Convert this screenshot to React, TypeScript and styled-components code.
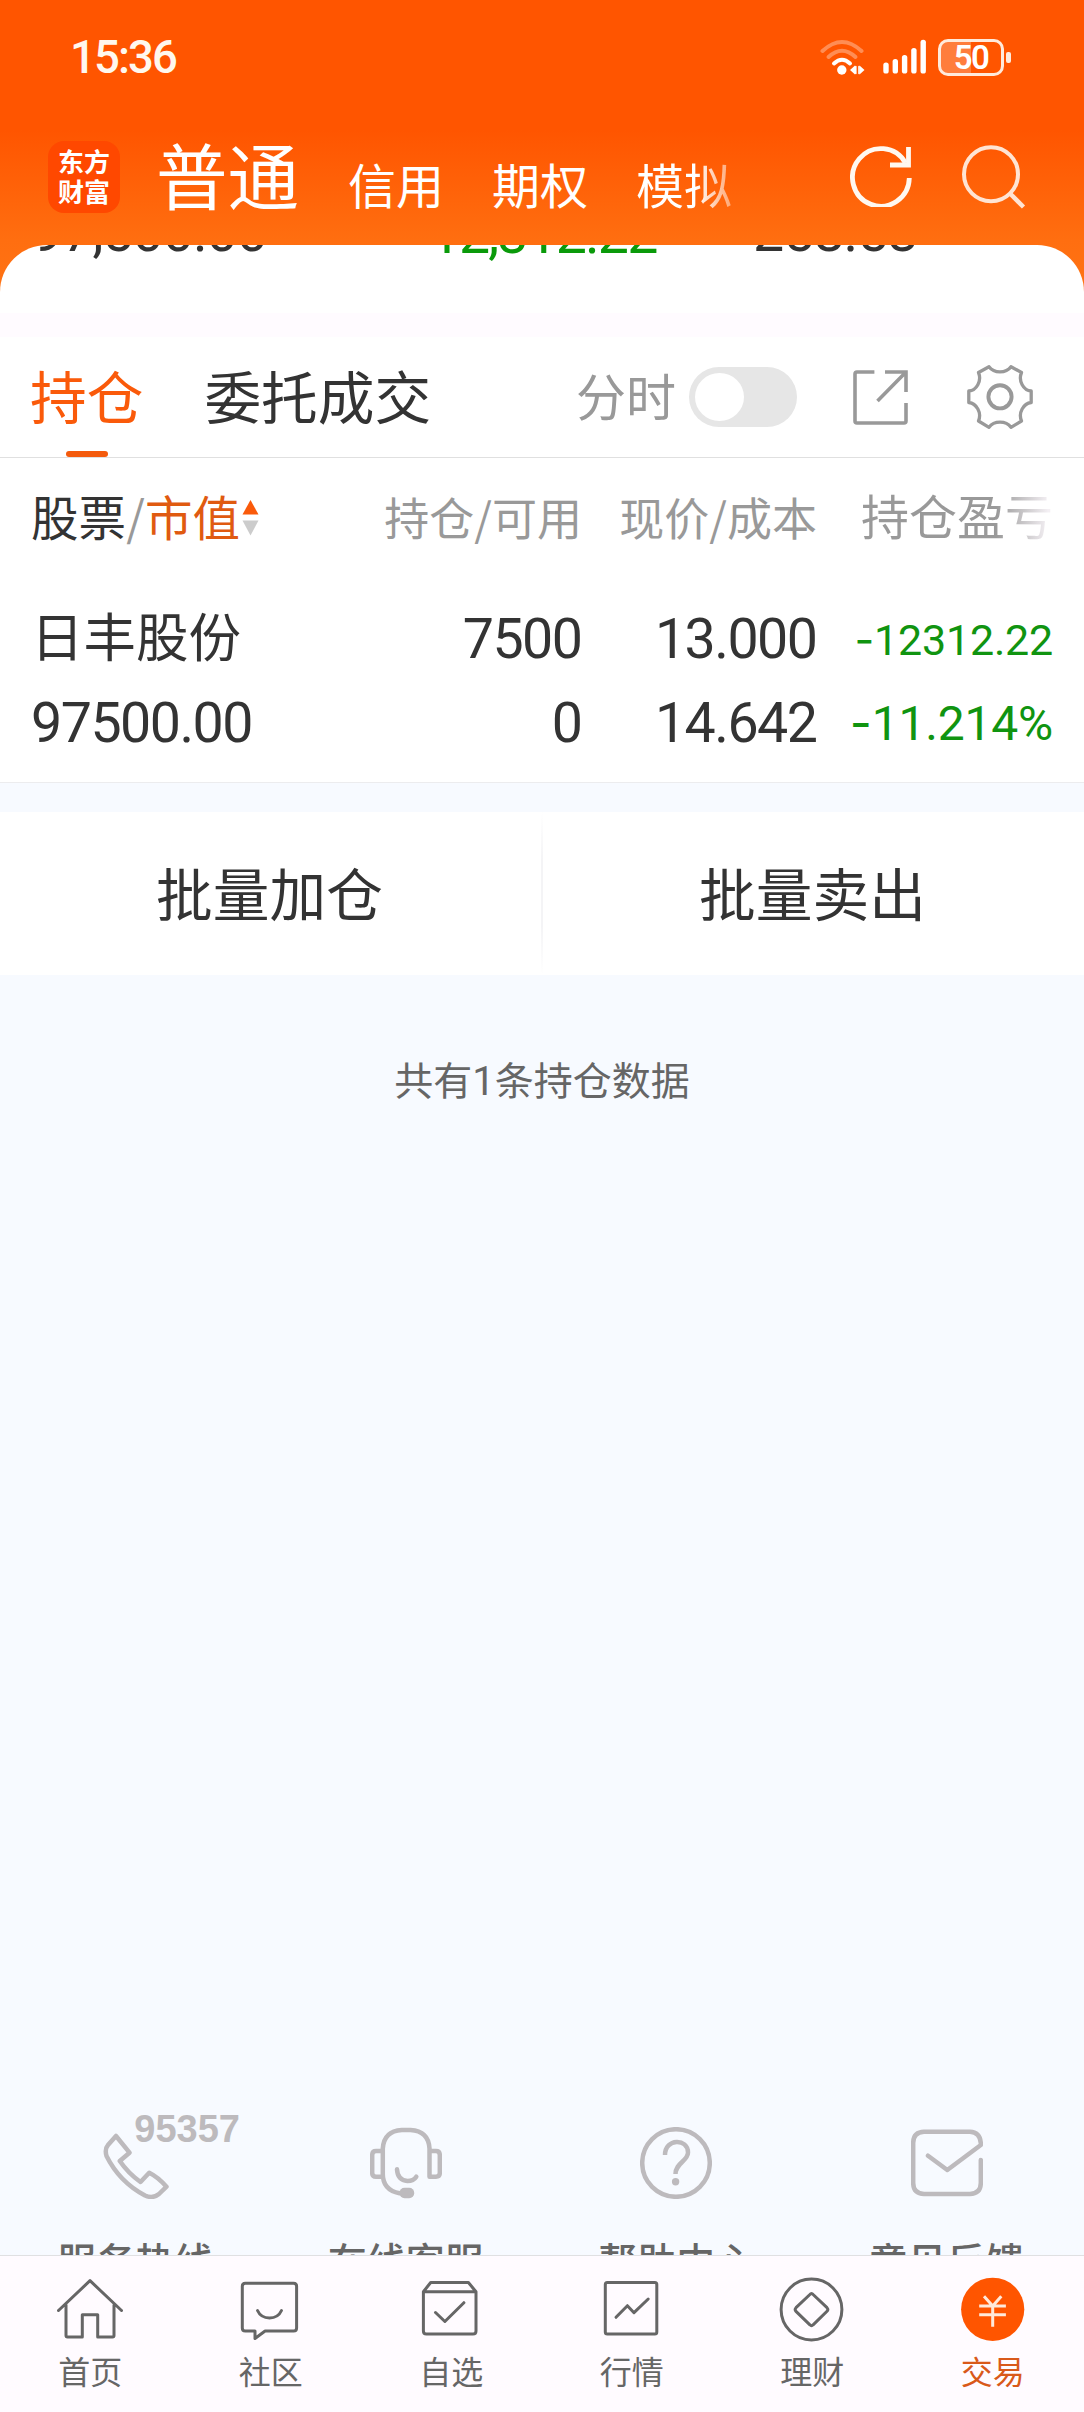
import React from 'react';
import styled, { createGlobalStyle } from 'styled-components';

const CJK = '"Noto Sans CJK SC", sans-serif';
const NUM = 'Roboto, "Noto Sans CJK SC", sans-serif';

const GlobalStyle = createGlobalStyle`
  * { box-sizing: border-box; }
  body { margin: 0; background: #f7faff; }
`;

const Screen = styled.div`
  width: 1084px;
  height: 2412px;
  display: flex;
  flex-direction: column;
  overflow: hidden;
  background: #f7faff;
  color: #333;
  font-family: ${CJK};
`;

const Top = styled.header`
  background: linear-gradient(#ff5500 0, #ff5500 130px, #ff6e10 240px, #ff7414 300px);
`;

const StatusBar = styled.div`
  height: 114px;
  display: flex;
  align-items: center;
  padding: 0 73px 0 70px;
`;

const Clock = styled.span`
  flex: 1;
  padding-top: 2px;
  font: 500 45.5px/60px ${NUM};
  letter-spacing: -1.9px;
  color: #fff8ee;
`;

const StatusIcons = styled.div`
  display: flex;
  align-items: center;
  svg { display: block; }
`;

const Battery = styled.div`
  width: 66px;
  height: 37px;
  margin-left: 11px;
  display: flex;
  align-items: center;
  justify-content: center;
  border: 3px solid #ffeadb;
  border-radius: 10px;
  background: linear-gradient(90deg, #ff7d3c 50%, transparent 50%);
  font: 600 33px/33px ${NUM};
  letter-spacing: -1.5px;
  color: #fff;
`;

const BatteryTip = styled.div`
  width: 5px;
  height: 11px;
  margin-left: 2px;
  border-radius: 2px;
  background: #ffeadb;
`;

const AppBar = styled.div`
  height: 131px;
  display: flex;
  align-items: center;
  padding: 0 58px 6px 48px;
  svg { display: block; }
`;

const Logo = styled.div`
  width: 72px;
  height: 72px;
  padding-top: 5px;
  border-radius: 16px;
  background: #ff4800;
  color: #fff;
  text-align: center;
  font: 700 26px/30px ${CJK};
`;

const Accounts = styled.nav`
  flex: 1;
  height: 88px;
  margin-left: 36px;
  display: flex;
  align-items: baseline;
  gap: 48px;
  color: #fff;
  line-height: 80px;
`;

const Account = styled.span<{ $active?: boolean; $fade?: boolean }>`
  font-size: ${p => (p.$active ? 71.5 : 48)}px;
  margin-right: ${p => (p.$active ? 1 : 0)}px;
  ${p => p.$fade && `
    background: linear-gradient(90deg, #fff 62%, rgba(255,255,255,.45) 98%);
    background-clip: text;
    -webkit-background-clip: text;
    color: transparent;
  `}
`;

const BarIcons = styled.div`
  display: flex;
  gap: 50px;
`;

const Sheet = styled.section`
  height: 68px;
  overflow: hidden;
  border-radius: 47px 47px 0 0;
  background: #fff;
`;

const Summary = styled.div`
  display: grid;
  grid-template-columns: 374px 347px 1fr;
  margin-top: -42px;
  padding-left: 32px;
  font: 400 55.5px/60px ${NUM};
`;

const Figure = styled.span<{ $loss?: boolean }>`
  letter-spacing: ${p => (p.$loss ? -1.9 : -1)}px;
  color: ${p => (p.$loss ? '#0a9a0a' : '#333')};
`;

const Strip = styled.div`
  height: 24px;
  background: #fffbff;
`;

const TabRow = styled.div`
  height: 121px;
  display: flex;
  align-items: center;
  padding: 0 51px 0 30px;
  background: #fff;
  border-bottom: 1px solid #e0e0e0;
  svg { display: block; }
`;

const Tab = styled.div<{ $active?: boolean }>`
  position: relative;
  height: 120px;
  margin-right: 61px;
  font-size: 56.7px;
  line-height: 114px;
  color: ${p => (p.$active ? '#fa5a0a' : '#333')};
  ${p => p.$active && `
    &::after {
      content: '';
      position: absolute;
      left: 36px;
      bottom: 0;
      width: 42px;
      height: 6px;
      border-radius: 3px;
      background: #f45a0c;
    }
  `}
`;

const Tools = styled.div`
  margin-left: auto;
  display: flex;
  align-items: center;
`;

const ToolLabel = styled.span`
  font-size: 50px;
  line-height: 114px;
  height: 120px;
  color: #999;
`;

const Switch = styled.div`
  width: 108px;
  height: 60px;
  margin: 0 56px 0 13px;
  padding: 6px;
  border-radius: 30px;
  background: #e6e6e6;
`;

const Knob = styled.div`
  width: 49px;
  height: 48px;
  border-radius: 50%;
  background: #fff;
`;

const Table = styled.section`
  background: #fff;
  border-bottom: 1px solid #ececee;
  padding: 0 31px 17px;
`;

const Row = styled.div<{ $height: number; $gap?: number }>`
  display: grid;
  grid-template-columns: 351px 200px 235px 236px;
  height: ${p => p.$height}px;
  margin-top: ${p => p.$gap ?? 0}px;
  line-height: ${p => p.$height}px;
`;

const HeadFirst = styled.div`
  display: flex;
  align-items: center;
  margin-top: -6px;
  font-size: 47.5px;
`;

const Slash = styled.i`
  width: 19px;
  text-align: center;
  font-style: normal;
  color: #999;
`;

const Sorted = styled.b`
  font-weight: 400;
  color: #e05a10;
`;

const Head = styled.div`
  margin-top: -2px;
  text-align: right;
  white-space: nowrap;
  font-size: 45px;
  color: #999;
`;

const FadedHead = styled(Head)`
  margin-top: -4px;
  font-size: 48px;
  background: linear-gradient(90deg, #999 76%, #f4f0f4 98%);
  background-clip: text;
  -webkit-background-clip: text;
  color: transparent;
`;

const StockName = styled.div`
  margin-top: -5px;
  font-size: 52.5px;
`;

const Num = styled.div<{ $left?: boolean }>`
  padding-top: 1px;
  text-align: ${p => (p.$left ? 'left' : 'right')};
  font-family: ${NUM};
  font-size: 55.5px;
  letter-spacing: -1.5px;
  ${p => !p.$left && 'padding-right: 0.5px;'}
`;

const Loss = styled.div<{ $size: number }>`
  text-align: right;
  white-space: nowrap;
  font-family: ${NUM};
  font-size: ${p => p.$size}px;
  letter-spacing: -0.2px;
  color: #109410;
`;

const Minus = styled.span`
  font-family: Inter, sans-serif;
`;

const Gap = styled.div`
  height: 29px;
`;

const Actions = styled.section`
  height: 163px;
  display: flex;
  align-items: center;
  background: #fff;
`;

const Action = styled.div`
  flex: 1;
  padding-right: 2px;
  text-align: center;
  font-size: 56.7px;
  line-height: 159px;
  height: 163px;
`;

const ActionRule = styled.div`
  width: 2px;
  height: 163px;
  background: linear-gradient(#fff, #f4f4f6 30%, #f4f4f6 70%, #fff);
`;

const Note = styled.p`
  margin: 75px 0 0;
  text-align: center;
  font-size: 39px;
  line-height: 56px;
  color: #666;
`;

const Count = styled.span`
  font-family: Roboto, sans-serif;
  font-size: 40px;
`;

const Services = styled.section`
  margin-top: auto;
  display: grid;
  grid-template-columns: repeat(4, 1fr);
  padding-right: 2px;
`;

const Service = styled.div`
  height: 148px;
  overflow: hidden;
  display: flex;
  flex-direction: column;
  align-items: center;
  padding-top: 20px;
  font-size: 39px;
  font-weight: 500;
  line-height: 50px;
  color: #666;
  svg { display: block; flex: none; margin-bottom: 35px; }
`;

const IconSlot = styled.div`
  position: relative;
`;

const Hotline = styled.span`
  position: absolute;
  left: 35px;
  top: -18px;
  font: 700 38px/40px "Liberation Sans", sans-serif;
  color: #bdbabd;
`;

const TabBar = styled.nav`
  height: 157px;
  display: grid;
  grid-template-columns: repeat(6, 1fr);
  padding-right: 1px;
  background: #fffbff;
  border-top: 1px solid #e0e0e2;
`;

const TabItem = styled.div<{ $active?: boolean }>`
  display: flex;
  flex-direction: column;
  align-items: center;
  padding-top: 20px;
  font-size: 32px;
  line-height: 40px;
  color: ${p => (p.$active ? '#d9591a' : '#666')};
  svg { display: block; margin-bottom: 8px; }
`;

const NavIcon = ({ children }: { children: React.ReactNode }) => (
  <svg width="66" height="66" viewBox="0 0 66 66" fill="none" stroke="#666" strokeWidth="3" strokeLinejoin="round" strokeLinecap="round">
    {children}
  </svg>
);

const ServiceIcon = ({ children }: { children: React.ReactNode }) => (
  <svg width="72" height="72" viewBox="0 0 72 72" fill="none" stroke="#bdbabd" strokeWidth="4.5" strokeLinejoin="round" strokeLinecap="round">
    {children}
  </svg>
);

const WifiIcon = () => (
  <svg width="46" height="37" viewBox="0 0 46 37" fill="none" stroke="#fff" strokeWidth="4" strokeLinecap="round">
    <path d="M2.500 12Q22 -6 41.500 12" opacity=".33" />
    <path d="M8.500 18Q22 5.500 35.500 18" opacity=".33" />
    <path d="M14 24.500Q22 17 30 24.500" />
    <circle cx="21.800" cy="31" r="4.700" fill="#fff" stroke="none" />
    <path d="M30 31l5-4.500v9zM44.500 31l-5-4.500v9z" fill="#fff" stroke="none" />
    <path d="M35.800 27.500v7M39 27.500v7" strokeWidth="1.600" />
  </svg>
);

const Signal = styled.svg`
  margin-left: 17px;
`;

const signalTops = [23.5, 20, 16, 9, 0.7];
const SignalIcon = () => (
  <Signal width="44" height="36" viewBox="0 0 44 36" fill="#fff">
    {signalTops.map((y, i) => (
      <rect key={y} x={i * 9.3 + 0.3} y={y} width="5.4" height={34.5 - y} rx="2.6" />
    ))}
  </Signal>
);

const RefreshIcon = () => (
  <svg width="62" height="62" viewBox="0 0 62 62" fill="none" stroke="#fff8f0" strokeWidth="4.800">
    <path d="M59.300 33A28.400 28.800 0 1 1 55.500 18" />
    <path d="M58.500 2V20H40" />
  </svg>
);

const SearchIcon = () => (
  <svg width="64" height="64" viewBox="0 0 64 64" fill="none" stroke="#ffe4d3" strokeWidth="4">
    <circle cx="29" cy="29.200" r="27" />
    <path d="M47.500 48L61.500 62" strokeWidth="4.500" />
  </svg>
);

const ShareIcon = () => (
  <svg width="55" height="55" viewBox="0 0 55 55" fill="none" stroke="#999" strokeWidth="3.600">
    <path d="M21.400 2H4Q2 2 2 4V51Q2 53 4 53H51Q53 53 53 51V33" />
    <path d="M32 2H53V22M53 2L24.500 31" />
  </svg>
);

const Gear = styled.svg`
  margin-left: 59px;
`;

const GearIcon = () => (
  <Gear width="66" height="64" viewBox="0 0 66 64" fill="none" stroke="#999" strokeWidth="3.300" strokeLinejoin="round">
    <path d="M22 1.700C27 8.500 39 8.500 44 1.700L54.500 7.500C51 16 56.500 25.500 64.200 26V37.500C56.500 38.500 51 47.500 54.500 56L44 62.300C39 55.500 27 55.500 22 62.300L11.500 56C15 47.500 9.500 38.500 1.800 37.500V26C9.500 25.500 15 16 11.500 7.500Z" />
    <circle cx="33" cy="31.800" r="11.600" strokeWidth="3.900" />
  </Gear>
);

const Sort = styled.svg`
  margin: 5px 0 0 2px;
`;

const SortIcon = () => (
  <Sort width="17" height="36" viewBox="0 0 17 36">
    <path d="M8.500 0L16.500 14.500H.5z" fill="#fa5a0a" />
    <path d="M8.500 35.500L16.500 20.500H.5z" fill="#ccc" />
  </Sort>
);

export default function App() {
  return (
    <Screen>
      <GlobalStyle />
      <Top>
        <StatusBar>
          <Clock>15:36</Clock>
          <StatusIcons>
            <WifiIcon />
            <SignalIcon />
            <Battery>50</Battery>
            <BatteryTip />
          </StatusIcons>
        </StatusBar>
        <AppBar>
          <Logo>东方<br />财富</Logo>
          <Accounts>
            <Account $active>普通</Account>
            <Account>信用</Account>
            <Account>期权</Account>
            <Account $fade>模拟</Account>
          </Accounts>
          <BarIcons>
            <RefreshIcon />
            <SearchIcon />
          </BarIcons>
        </AppBar>
        <Sheet>
          <Summary>
            <Figure>97,500.00</Figure>
            <Figure $loss><Minus>-</Minus>12,312.22</Figure>
            <Figure>258.53</Figure>
          </Summary>
        </Sheet>
      </Top>
      <Strip />
      <TabRow>
        <Tab $active>持仓</Tab>
        <Tab>委托成交</Tab>
        <Tools>
          <ToolLabel>分时</ToolLabel>
          <Switch><Knob /></Switch>
          <ShareIcon />
          <GearIcon />
        </Tools>
      </TabRow>
      <Table>
        <Row $height={121}>
          <HeadFirst>股票<Slash>/</Slash><Sorted>市值</Sorted><SortIcon /></HeadFirst>
          <Head>持仓/可用</Head>
          <Head>现价/成本</Head>
          <FadedHead>持仓盈亏</FadedHead>
        </Row>
        <Row $height={84} $gap={18}>
          <StockName>日丰股份</StockName>
          <Num>7500</Num>
          <Num>13.000</Num>
          <Loss $size={43}><Minus>-</Minus>12312.22</Loss>
        </Row>
        <Row $height={84}>
          <Num $left>97500.00</Num>
          <Num>0</Num>
          <Num>14.642</Num>
          <Loss $size={48}><Minus>-</Minus>11.214%</Loss>
        </Row>
      </Table>
      <Gap />
      <Actions>
        <Action>批量加仓</Action>
        <ActionRule />
        <Action>批量卖出</Action>
      </Actions>
      <Note>共有<Count>1</Count>条持仓数据</Note>
      <Services>
        <Service>
          <IconSlot>
            <ServiceIcon>
              <path d="M17 9L30.500 25.700L20.800 34Q29 46 41.500 55L50.200 45.700Q59 50 67.500 59.700L60 67Q54 72 46 68.500C28 59 15 44 7.500 29Q5.500 22 9 18Z" />
            </ServiceIcon>
            <Hotline>95357</Hotline>
          </IconSlot>
          服务热线
        </Service>
        <Service>
          <ServiceIcon>
            <path d="M12.800 49.700H6Q2.200 49.700 2.200 46V28Q2.200 24 6 24H12.800" />
            <path d="M29.500 66.300Q12.800 63 12.800 47V21.500Q14 4 31.800 3H40.500Q58.500 4 59.500 21.500V49.700H66Q69.800 49.700 69.800 46V28Q69.800 24 66 24H60" />
            <path d="M27 42.300Q27.500 53 37.500 54Q43.500 54 46.300 49.700" />
            <rect x="29.500" y="60.700" width="14.700" height="10.600" rx="5" fill="#bdbabd" stroke="none" />
          </ServiceIcon>
          在线客服
        </Service>
        <Service>
          <ServiceIcon>
            <circle cx="36" cy="36" r="33.800" />
            <path d="M25 28C25 11 48 11 48 25.500C48 34 35.500 36 35.500 47" strokeLinecap="butt" />
            <circle cx="35.600" cy="54.700" r="3.700" fill="#bdbabd" stroke="none" />
          </ServiceIcon>
          帮助中心
        </Service>
        <Service>
          <ServiceIcon>
            <path d="M17 28.700L36.300 43L69.800 18V16Q69 5 59 4.700H13Q2.200 5 2.200 16V56Q2.200 66.500 13 67H59Q69.800 66.500 69.800 56V33" />
          </ServiceIcon>
          意见反馈
        </Service>
      </Services>
      <TabBar>
        <TabItem>
          <NavIcon>
            <path d="M1.500 34.500L33 4.700L64.500 34.500M9 29V59.500Q9 61 10.500 61H25.300V38.700H40.700V61H55.500Q57 61 57 59.500V29" />
          </NavIcon>
          首页
        </TabItem>
        <TabItem>
          <NavIcon>
            <path d="M7.300 7.300H55.600Q58.600 7.300 58.600 10.300V52Q58.600 55 55.600 55H27.100L17 62.500V55H7.300Q4.300 55 4.300 52V10.300Q4.300 7.300 7.300 7.300Z" />
            <path d="M19.500 34.500C24 44.500 39 44.500 43.500 34.500" />
          </NavIcon>
          社区
        </TabItem>
        <TabItem>
          <NavIcon>
            <path d="M5.400 15.700L12.700 6.500H50.400L58 15.700V55Q58 58 55 58H8.400Q5.400 58 5.400 55ZM5.400 15.700H58M17.500 36.500L26.900 45.500L45.900 26.700" />
          </NavIcon>
          自选
        </TabItem>
        <TabItem>
          <NavIcon>
            <rect x="6.300" y="6.500" width="51.500" height="51.500" rx="2" />
            <path d="M17 41.300L28.400 29.700L35 36.700L49.200 23" />
          </NavIcon>
          行情
        </TabItem>
        <TabItem>
          <NavIcon>
            <circle cx="32.500" cy="33.500" r="30.400" />
            <path d="M30.900 18.500Q32.500 16.500 34.100 18.500L48 31.700Q49.800 33.500 48 35.300L34.100 48.800Q32.500 50.500 30.900 48.800L17 35.300Q15.200 33.500 17 31.700Z" />
          </NavIcon>
          理财
        </TabItem>
        <TabItem $active>
          <NavIcon>
            <circle cx="32.700" cy="33.300" r="31.600" fill="#ff5500" stroke="none" />
            <path d="M24 20.300L32.700 30L41.300 20.300M19.200 30H45.900M19.200 38.700H45.900M32.700 30V50.700" stroke="#ffeadb" strokeLinecap="butt" />
          </NavIcon>
          交易
        </TabItem>
      </TabBar>
    </Screen>
  );
}
